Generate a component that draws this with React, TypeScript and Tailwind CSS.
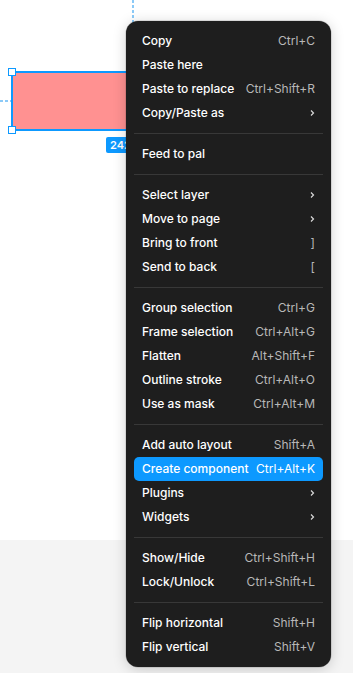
import React from "react";

type Item = { label: string; shortcut?: string; sub?: boolean; active?: boolean };

const groups: Item[][] = [
  [
    { label: "Copy", shortcut: "Ctrl+C" },
    { label: "Paste here" },
    { label: "Paste to replace", shortcut: "Ctrl+Shift+R" },
    { label: "Copy/Paste as", sub: true },
  ],
  [{ label: "Feed to pal" }],
  [
    { label: "Select layer", sub: true },
    { label: "Move to page", sub: true },
    { label: "Bring to front", shortcut: "]" },
    { label: "Send to back", shortcut: "[" },
  ],
  [
    { label: "Group selection", shortcut: "Ctrl+G" },
    { label: "Frame selection", shortcut: "Ctrl+Alt+G" },
    { label: "Flatten", shortcut: "Alt+Shift+F" },
    { label: "Outline stroke", shortcut: "Ctrl+Alt+O" },
    { label: "Use as mask", shortcut: "Ctrl+Alt+M" },
  ],
  [
    { label: "Add auto layout", shortcut: "Shift+A" },
    { label: "Create component", shortcut: "Ctrl+Alt+K", active: true },
    { label: "Plugins", sub: true },
    { label: "Widgets", sub: true },
  ],
  [
    { label: "Show/Hide", shortcut: "Ctrl+Shift+H" },
    { label: "Lock/Unlock", shortcut: "Ctrl+Shift+L" },
  ],
  [
    { label: "Flip horizontal", shortcut: "Shift+H" },
    { label: "Flip vertical", shortcut: "Shift+V" },
  ],
];

function Chevron() {
  return (
    <svg width="5" height="8" viewBox="0 0 5 8">
      <path d="M1 1.5 L3.5 4 L1 6.5" fill="none" stroke="#d9d9d9" strokeWidth="1.2" />
    </svg>
  );
}

function Row({ item }: { item: Item }) {
  return (
    <div
      className={
        "flex h-6 items-center justify-between rounded-[5px] px-2 " +
        (item.active ? "bg-[#0d99ff]" : "")
      }
    >
      <span className="text-[12px] font-medium text-white">{item.label}</span>
      {item.shortcut && (
        <span className={"text-[12px] " + (item.active ? "text-white" : "text-[#b8b8b8]")}>
          {item.shortcut}
        </span>
      )}
      {item.sub && <Chevron />}
    </div>
  );
}

export default function App() {
  return (
    <div
      className="relative h-[673px] w-[353px] overflow-hidden"
      style={{ fontFamily: "Inter, 'Noto Sans', sans-serif" }}
    >
      <div className="flex h-full flex-col">
        <div className="h-[540px] bg-white" />
        <div className="flex-1 bg-[#f4f4f4]" />
      </div>

      {/* vertical guide */}
      <div className="absolute left-[132px] top-0 h-[24px] w-[2px] bg-[repeating-linear-gradient(to_bottom,#8ccaf7_0px,#8ccaf7_3px,transparent_3px,transparent_5px)]" />
      {/* horizontal guide */}
      <div className="absolute left-0 top-[100px] h-[2px] w-[11px] bg-[repeating-linear-gradient(to_right,#8ccaf7_0px,#8ccaf7_3px,transparent_3px,transparent_5px)]" />

      {/* selected rectangle */}
      <div className="absolute left-[11px] top-[71px] h-[60px] w-[180px] border-2 border-[#0d99ff] bg-[#ff9191]" />
      <div className="absolute left-[8px] top-[68px] h-[8px] w-[8px] border border-[#0d99ff] bg-white" />
      <div className="absolute left-[8px] top-[126px] h-[8px] w-[8px] border border-[#0d99ff] bg-white" />

      {/* dimension badge */}
      <div className="absolute left-[106px] top-[137px] flex h-[16px] w-[40px] items-center rounded-[2px] bg-[#0d99ff] px-[4px] text-[11px] font-semibold text-white">
        242
      </div>

      {/* context menu */}
      <div className="absolute left-[126px] top-[21px] w-[205px] rounded-[12px] bg-[#1e1e1e] p-2 shadow-[0_2px_14px_rgba(0,0,0,0.18),0_0_0_0.5px_rgba(0,0,0,0.2)]">
        {groups.map((g, gi) => (
          <React.Fragment key={gi}>
            {gi > 0 && <div className="my-2 h-px bg-[#383838]" />}
            {g.map((it) => (
              <Row key={it.label} item={it} />
            ))}
          </React.Fragment>
        ))}
      </div>
    </div>
  );
}
